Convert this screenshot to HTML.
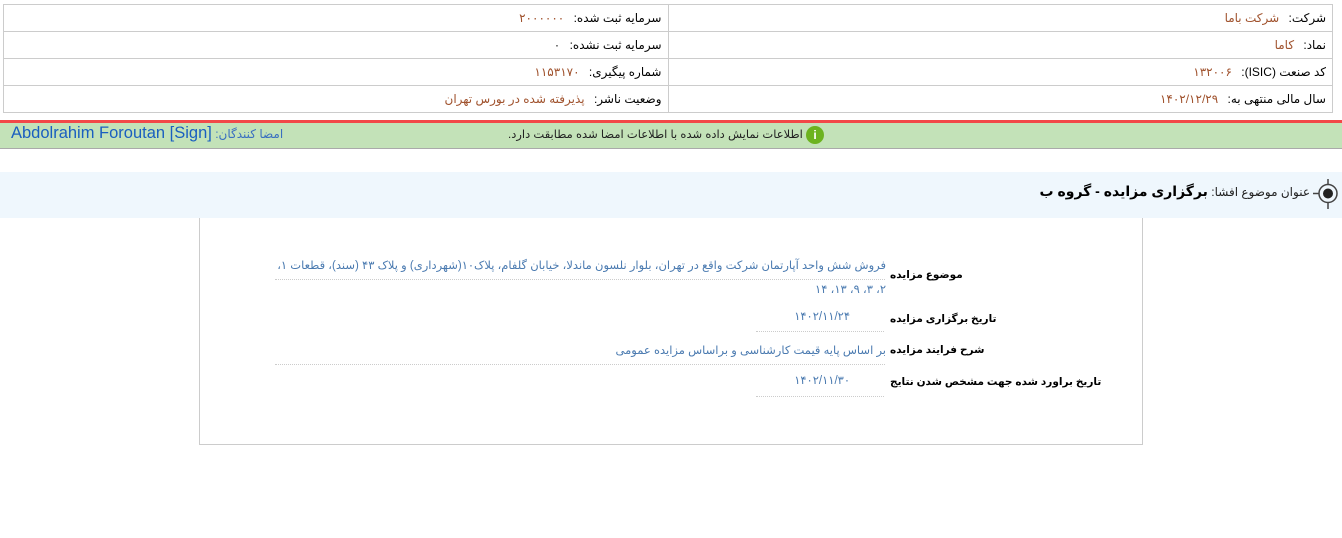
<!DOCTYPE html>
<html lang="fa" dir="rtl"><head><meta charset="utf-8">
<style>
body{margin:0;width:1342px;height:538px;background:#fff;font-family:"Liberation Sans","DejaVu Sans",sans-serif;font-size:12px;color:#000;position:relative;overflow:hidden}
.a{position:absolute;white-space:nowrap}
table.t{position:absolute;left:3px;top:4px;width:1330px;border-collapse:collapse}
table.t td{border:1px solid #ccc;height:26px;padding:0 6px;direction:rtl;text-align:right;width:50%}
.v{color:#a0522d;margin-right:6px}
.lbl{font-weight:bold;font-size:10.5px;direction:rtl}
.val{color:#4a7ab0;font-size:11.5px}
.dl{position:absolute;border-bottom:1px dotted #ccc}
</style></head><body>
<table class="t">
<tr><td>شرکت: <span class="v">شرکت باما</span></td><td>سرمایه ثبت شده: <span class="v">۲۰۰۰۰۰۰</span></td></tr>
<tr><td>نماد: <span class="v">کاما</span></td><td>سرمایه ثبت نشده: <span class="v" style="color:#333">۰</span></td></tr>
<tr><td>کد صنعت (ISIC): <span class="v">۱۳۲۰۰۶</span></td><td>شماره پیگیری: <span class="v">۱۱۵۳۱۷۰</span></td></tr>
<tr><td>سال مالی منتهی به: <span class="v">۱۴۰۲/۱۲/۲۹</span></td><td>وضعیت ناشر: <span class="v">پذیرفته شده در بورس تهران</span></td></tr>
</table>
<div class="a" style="left:0;top:120px;width:1342px;height:3px;background:#f24848"></div>
<div class="a" style="left:0;top:123px;width:1342px;height:25px;background:#c3e2b8;border-bottom:1px solid #aaa"></div>
<div class="a" style="right:518px;top:126px;direction:rtl;font-size:11.5px;color:#222">
<span style="display:inline-block;width:18px;height:18px;border-radius:50%;background:#6cb31f;color:#fff;text-align:center;font-weight:bold;line-height:18px;vertical-align:middle;font-size:12px">i</span> اطلاعات نمایش داده شده با اطلاعات امضا شده مطابقت دارد.</div>
<div class="a" style="left:11px;top:124px;direction:rtl;color:#1a5fc0"><span style="font-size:12px;color:#3a6fc0">امضا کنندگان:</span> <span style="font-size:16.5px" dir="ltr">Abdolrahim Foroutan [Sign]</span></div>
<div class="a" style="left:0;top:172px;width:1342px;height:46px;background:#eff7fd"></div>
<svg class="a" style="left:1313px;top:177px" width="29" height="33" viewBox="0 0 29 33"><circle cx="15" cy="16.5" r="9" fill="none" stroke="#444" stroke-width="1.5"/><circle cx="15" cy="16.5" r="5" fill="#222"/><path d="M15 2v6M15 25v7M0 16.5h6" stroke="#444" stroke-width="1.5"/></svg>
<div class="a" style="right:32px;top:183px;direction:rtl;font-size:12px;color:#222">عنوان موضوع افشا: <b style="font-size:14px;color:#000">برگزاری مزایده - گروه ب</b></div>
<div class="a" style="left:199px;top:218px;width:942px;height:226px;border:1px solid #ccc;border-top:none"></div>
<div class="a lbl" style="left:890px;top:269px">موضوع مزایده</div>
<div class="a val" style="right:456px;top:258px;direction:rtl">فروش شش واحد آپارتمان شرکت واقع در تهران، بلوار نلسون ماندلا، خیابان گلفام، پلاک۱۰(شهرداری) و پلاک ۴۳ (سند)، قطعات ۱،</div>
<div class="dl" style="left:275px;width:610px;top:279px"></div>
<div class="a val" style="right:456px;top:282px;direction:rtl">۲، ۳، ۹، ۱۳، ۱۴</div>
<div class="a lbl" style="left:890px;top:313px">تاریخ برگزاری مزایده</div>
<div class="a val" style="right:492px;top:309px">۱۴۰۲/۱۱/۲۴</div>
<div class="dl" style="left:756px;width:128px;top:331px"></div>
<div class="a lbl" style="left:890px;top:344px">شرح فرایند مزایده</div>
<div class="a val" style="right:456px;top:343px;direction:rtl">بر اساس پایه قیمت کارشناسی و براساس مزایده عمومی</div>
<div class="dl" style="left:275px;width:610px;top:364px"></div>
<div class="a lbl" style="left:890px;top:376px">تاریخ براورد شده جهت مشخص شدن نتایج</div>
<div class="a val" style="right:492px;top:373px">۱۴۰۲/۱۱/۳۰</div>
<div class="dl" style="left:756px;width:128px;top:396px"></div>
</body></html>
